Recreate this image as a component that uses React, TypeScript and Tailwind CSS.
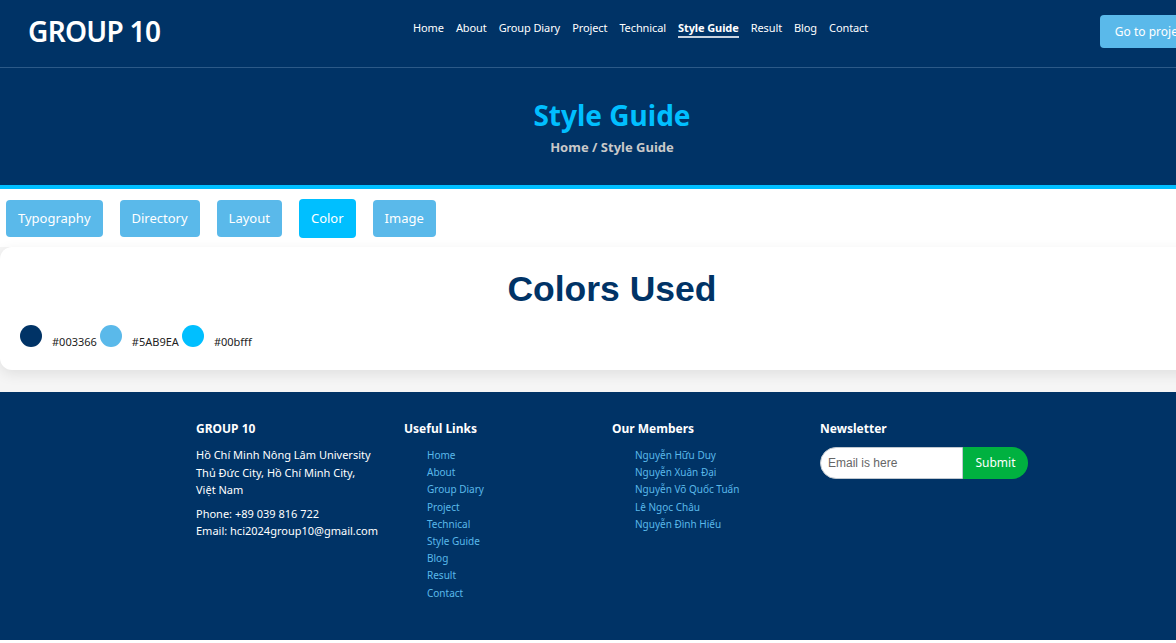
import React from 'react'

const NAV = ['Home', 'About', 'Group Diary', 'Project', 'Technical', 'Style Guide', 'Result', 'Blog', 'Contact']
const TABS = ['Typography', 'Directory', 'Layout', 'Color', 'Image']
const LINKS = ['Home', 'About', 'Group Diary', 'Project', 'Technical', 'Style Guide', 'Blog', 'Result', 'Contact']
const MEMBERS = ['Nguyễn Hữu Duy', 'Nguyễn Xuân Đại', 'Nguyễn Võ Quốc Tuấn', 'Lê Ngọc Châu', 'Nguyễn Đình Hiếu']
const COLORS = [
  { hex: '#003366', cls: 'bg-[#003366]' },
  { hex: '#5AB9EA', cls: 'bg-[#5AB9EA]' },
  { hex: '#00bfff', cls: 'bg-[#00bfff]' },
]

export default function App() {
  return (
    <div className="w-[1176px] overflow-hidden bg-white font-['Noto_Sans','Open_Sans',sans-serif]">
      <div className="w-[1224px]">
        {/* Header */}
        <header className="flex h-[68px] items-center border-b border-[#2c5a88] bg-[#003366] pl-[28px] pr-[21px]">
          <div className="-mt-[6px] w-[385px] shrink-0 text-[28px] font-semibold tracking-tight text-white">GROUP 10</div>
          <nav className="-mt-[9px] flex items-center gap-[12px] text-[11px] tracking-[-0.1px] text-white">
            {NAV.map(n => (
              <a
                key={n}
                className={n === 'Style Guide' ? 'border-b-2 border-[#c9d3df] font-bold leading-[16px]' : 'leading-[16px] pb-[2px]'}
              >
                {n}
              </a>
            ))}
          </nav>
          <button className="-mt-[4px] ml-auto h-[33px] whitespace-nowrap rounded-[4px] bg-[#5AB9EA] px-[15px] text-[12px] text-white">
            Go to project
          </button>
        </header>

        {/* Hero */}
        <section className="flex h-[121px] flex-col items-center border-b-[4px] border-[#00bfff] bg-[#003366] pt-[28px]">
          <h1 className="text-[28px] font-bold leading-[38px] text-[#00bfff]">Style Guide</h1>
          <p className="mt-[4px] text-[13px] font-bold text-[#c9c9c9]">Home / Style Guide</p>
        </section>

        {/* Tabs */}
        <div className="flex items-center gap-[17px] pl-[6px] pt-[10px] pb-[9px]">
          {TABS.map(t => (
            <button
              key={t}
              className={
                t === 'Color'
                  ? 'h-[39px] rounded-[4px] bg-[#00bfff] px-[12px] text-[13px] text-white'
                  : 'h-[37px] rounded-[4px] bg-[#5AB9EA] px-[12px] text-[13px] text-white'
              }
            >
              {t}
            </button>
          ))}
        </div>

        {/* Card area */}
        <div className="bg-[#f5f5f5] pb-[22px]">
          <div className="rounded-[12px] bg-white px-[20px] pb-[23px] pt-[22px] shadow-[0_4px_14px_rgba(0,0,0,0.09)]">
            <h2 className="text-center font-['Liberation_Sans',Arial,sans-serif] text-[35.5px] font-bold leading-[40px] text-[#003366]">
              Colors Used
            </h2>
            <div className="mt-[16px] flex items-end">
              {COLORS.map(c => (
                <div key={c.hex} className="flex items-end">
                  <span className={`inline-block h-[22px] w-[22px] rounded-full ${c.cls}`} />
                  <span className="ml-[10px] mr-[3px] text-[11px] leading-[11px] text-[#222]">{c.hex}</span>
                </div>
              ))}
            </div>
          </div>
        </div>

        {/* Footer */}
        <footer className="h-[248px] bg-[#003366] pt-[28px]">
          <div className="mx-auto grid w-[832px] grid-cols-4">
            <div className="text-white">
              <h4 className="text-[12px] font-bold">GROUP 10</h4>
              <p className="mt-[8px] text-[11px] leading-[17.5px]">
                Hồ Chí Minh Nông Lâm University<br />
                Thủ Đức City, Hồ Chí Minh City,<br />
                Việt Nam
              </p>
              <p className="mt-[6px] text-[11px] leading-[17.5px]">
                Phone: +89 039 816 722<br />
                Email: hci2024group10@gmail.com
              </p>
            </div>
            <div>
              <h4 className="text-[12px] font-bold text-white">Useful Links</h4>
              <ul className="mt-[9px] pl-[23px]">
                {LINKS.map(l => (
                  <li key={l} className="text-[10px] leading-[17.2px] text-[#5AB9EA]">{l}</li>
                ))}
              </ul>
            </div>
            <div>
              <h4 className="text-[12px] font-bold text-white">Our Members</h4>
              <ul className="mt-[9px] pl-[23px]">
                {MEMBERS.map(m => (
                  <li key={m} className="text-[10px] leading-[17.2px] text-[#5AB9EA]">{m}</li>
                ))}
              </ul>
            </div>
            <div>
              <h4 className="text-[12px] font-bold text-white">Newsletter</h4>
              <div className="mt-[9px] flex h-[32px] w-[208px]">
                <input
                  placeholder="Email is here"
                  className="w-[143px] rounded-l-full border border-[#c0c8d0] bg-white px-[7px] font-['Liberation_Sans',Arial,sans-serif] text-[12px] text-[#333] placeholder:text-[#666] outline-none"
                />
                <button className="flex-1 rounded-r-full bg-[#00b140] text-[12px] text-white">Submit</button>
              </div>
            </div>
          </div>
        </footer>
      </div>
    </div>
  )
}
